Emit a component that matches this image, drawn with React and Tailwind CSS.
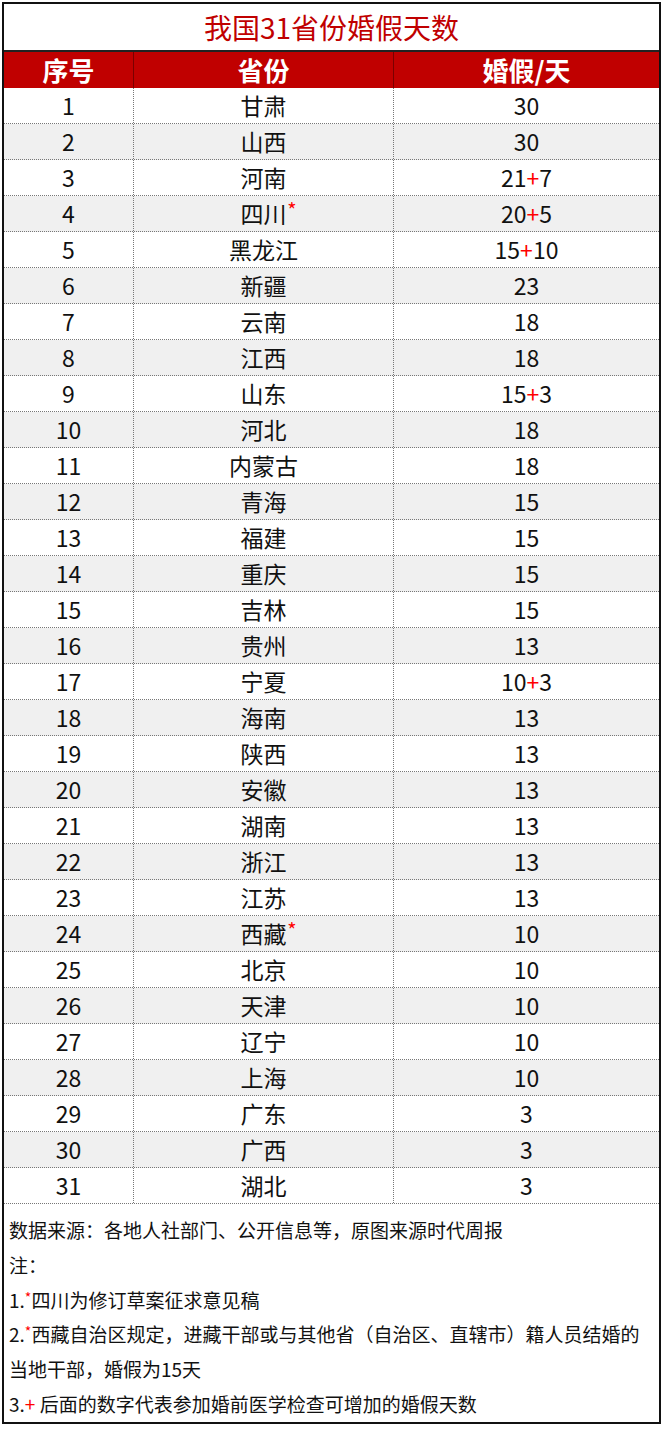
import React from "react";

const rows = [
  ["1", "甘肃", "30"],
  ["2", "山西", "30"],
  ["3", "河南", "21+7"],
  ["4", "四川*", "20+5"],
  ["5", "黑龙江", "15+10"],
  ["6", "新疆", "23"],
  ["7", "云南", "18"],
  ["8", "江西", "18"],
  ["9", "山东", "15+3"],
  ["10", "河北", "18"],
  ["11", "内蒙古", "18"],
  ["12", "青海", "15"],
  ["13", "福建", "15"],
  ["14", "重庆", "15"],
  ["15", "吉林", "15"],
  ["16", "贵州", "13"],
  ["17", "宁夏", "10+3"],
  ["18", "海南", "13"],
  ["19", "陕西", "13"],
  ["20", "安徽", "13"],
  ["21", "湖南", "13"],
  ["22", "浙江", "13"],
  ["23", "江苏", "13"],
  ["24", "西藏*", "10"],
  ["25", "北京", "10"],
  ["26", "天津", "10"],
  ["27", "辽宁", "10"],
  ["28", "上海", "10"],
  ["29", "广东", "3"],
  ["30", "广西", "3"],
  ["31", "湖北", "3"],
];

const font = { fontFamily: '"Noto Sans CJK SC", "Noto Sans", sans-serif' };

function Province({ name }) {
  if (name.endsWith("*")) {
    return (
      <span className="relative">
        {name.slice(0, -1)}
        <span className="absolute -right-[10px] top-[4px] text-[20px] leading-none text-[#ff0000]">*</span>
      </span>
    );
  }
  return <span>{name}</span>;
}

function Days({ v }) {
  if (v.includes("+")) {
    const [a, b] = v.split("+");
    return (
      <span>
        {a}
        <span className="text-[#ff0000]">+</span>
        {b}
      </span>
    );
  }
  return <span>{v}</span>;
}

export default function App() {
  return (
    <div className="w-[665px] h-[1437px] bg-white" style={font}>
      <div className="ml-[2px] mt-[2px] w-[659px] border-2 border-[#111] bg-white">
        <div className="h-[48px] flex items-center justify-center text-[28px] text-[#c00000] border-b-2 border-[#222]">
          我国31省份婚假天数
        </div>
        <div className="grid grid-cols-[130px_260px_1fr] h-[36px] bg-[#c00000] text-white font-bold text-[26px] leading-none">
          <div className="flex items-center justify-center border-r border-[#7a0000]">序号</div>
          <div className="flex items-center justify-center border-r border-[#7a0000]">省份</div>
          <div className="flex items-center justify-center">婚假/天</div>
        </div>
        {rows.map((r, i) => (
          <div
            key={r[0]}
            className={
              "grid grid-cols-[130px_260px_1fr] h-[36px] text-[23px] text-[#111] border-b border-dotted border-[#777] " +
              (i % 2 === 1 ? "bg-[#f0f0f0]" : "bg-white")
            }
          >
            <div className="flex items-center justify-center border-r border-dotted border-[#777]">{r[0]}</div>
            <div className="flex items-center justify-center border-r border-dotted border-[#777]">
              <Province name={r[1]} />
            </div>
            <div className="flex items-center justify-center">
              <Days v={r[2]} />
            </div>
          </div>
        ))}
        <div className="pt-[9px] pl-[5px] text-[19px] leading-[34.8px] text-[#111] h-[218px] whitespace-nowrap">
          <div className="h-[34.8px]">数据来源：各地人社部门、公开信息等，原图来源时代周报</div>
          <div className="h-[34.8px]">注：</div>
          <div className="h-[34.8px]">
            1.<span className="relative -top-[5px] text-[14px] leading-none text-[#ff0000]">*</span>四川为修订草案征求意见稿
          </div>
          <div className="h-[34.8px]">
            2.<span className="relative -top-[5px] text-[14px] leading-none text-[#ff0000]">*</span>西藏自治区规定，进藏干部或与其他省（自治区、直辖市）籍人员结婚的
          </div>
          <div className="h-[34.8px]">当地干部，婚假为15天</div>
          <div className="h-[34.8px]">
            3.<span className="text-[#ff0000]">+</span> 后面的数字代表参加婚前医学检查可增加的婚假天数
          </div>
        </div>
      </div>
    </div>
  );
}
